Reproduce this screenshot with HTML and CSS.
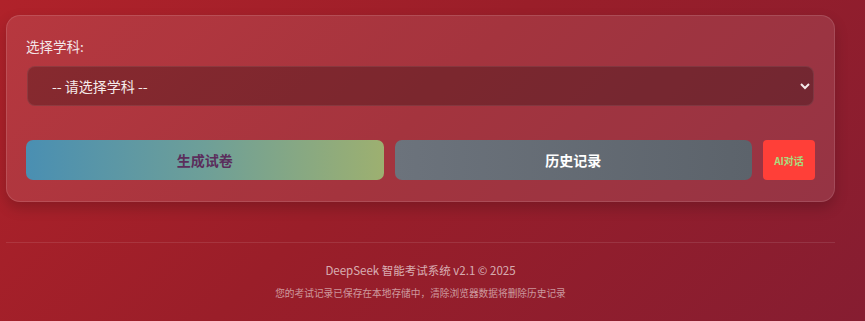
FILE: index.html
```
<!DOCTYPE html>
<html lang="zh-CN">
<head>
  <meta charset="UTF-8">
  <title>DeepSeek 智能考试系统</title>
  <link rel="stylesheet" href="styles.css">
</head>
<body>
  <div class="wrapper">
    <div class="card">
      <!-- 学科选择 -->
      <label for="subject" class="field-label">选择学科:</label>
      <select id="subject" class="subject-select">
        <option value="">-- 请选择学科 --</option>
      </select>

      <!-- 操作按钮 -->
      <div class="actions">
        <button class="btn btn-generate">生成试卷</button>
        <button class="btn btn-history">历史记录</button>
        <button class="btn-chat">AI对话</button>
      </div>
    </div>

    <footer class="footer">
      <p class="copyright">DeepSeek 智能考试系统 v2.1 © 2025</p>
      <p class="note">您的考试记录已保存在本地存储中，清除浏览器数据将删除历史记录</p>
    </footer>
  </div>
</body>
</html>
```

FILE: styles.css
```
html, body {
  height: 100%;
}
body {
  font-family: "Noto Sans CJK SC", "Noto Sans", sans-serif;
  background: linear-gradient(135deg, #b0222a 0%, #9a1e29 45%, #861d31 100%);
  margin: 0;
  padding: 0;
  color: #fff;
  overflow: hidden;
}
.wrapper {
  width: 829px;
  margin-left: 6px;
  padding-top: 15px;
}
.card {
  background: rgba(255, 255, 255, 0.1);
  border: 1px solid rgba(255, 255, 255, 0.12);
  border-radius: 14px;
  padding: 20px 19px;
  box-shadow: 0 6px 14px rgba(0, 0, 0, 0.18);
  box-sizing: border-box;
  height: 187px;
}
.field-label {
  display: block;
  font-size: 13.5px;
  line-height: 20px;
  margin-top: 0;
  color: #f3e6e8;
}
.subject-select {
  display: block;
  width: 787px;
  height: 40px;
  margin: 10px 0 0 1px;
  padding: 0 20px;
  font-family: inherit;
  font-size: 14px;
  color: #f5eaea;
  background: rgba(0, 0, 0, 0.25);
  border: 1px solid rgba(255, 255, 255, 0.08);
  border-radius: 8px;
  box-sizing: border-box;
}
.actions {
  display: flex;
  align-items: center;
  gap: 11px;
  margin-top: 34px;
}
.btn {
  flex: 1;
  height: 40px;
  border: none;
  border-radius: 7px;
  font-family: inherit;
  font-size: 14px;
  font-weight: bold;
  cursor: pointer;
}
.btn-generate {
  background: linear-gradient(90deg, #4a8fb2 0%, #6e9f98 50%, #9db070 100%);
  color: #5b2d5c;
}
.btn-history {
  background: linear-gradient(90deg, #6c737c 0%, #5c636b 100%);
  color: #fff;
}
.btn-chat {
  width: 52px;
  height: 40px;
  border: none;
  border-radius: 4px;
  background: #ff3f38;
  color: #a9db7e;
  font-family: inherit;
  font-size: 10px;
  font-weight: bold;
  padding: 0;
  cursor: pointer;
}
.footer {
  margin-top: 40px;
  border-top: 1px solid rgba(255, 255, 255, 0.1);
  text-align: center;
  padding-top: 19px;
}
.copyright {
  margin: 0;
  font-size: 11.5px;
  line-height: 16px;
  color: rgba(255, 255, 255, 0.65);
}
.note {
  margin: 8px 0 0;
  font-size: 9.7px;
  line-height: 14px;
  color: rgba(255, 255, 255, 0.55);
}
```
